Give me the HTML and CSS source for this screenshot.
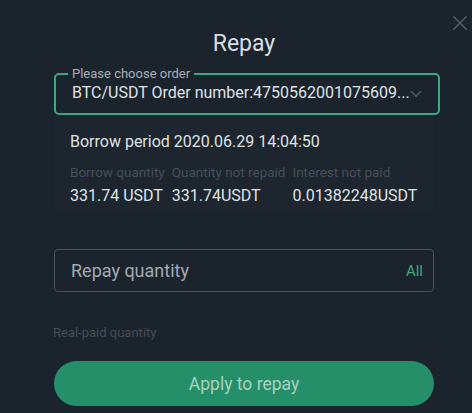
FILE: index.html
```html
<!DOCTYPE html>
<html lang="en">
<head>
    <meta charset="UTF-8">
    <meta name="viewport" content="width=device-width, initial-scale=1.0">
    <title>Repay</title>
    <link rel="stylesheet" href="styles.css">
</head>
<body>
    <div class="dialog">
        <button class="close" aria-label="Close">
            <svg width="16" height="16" viewBox="0 0 16 16"><path d="M1.5 1.5 L14.5 14.5 M14.5 1.5 L1.5 14.5" stroke="#59626c" stroke-width="1.4" fill="none"/></svg>
        </button>

        <h1>Repay</h1>

        <fieldset class="order-select">
            <legend>Please choose order</legend>
            <div class="select-row">
                <span class="select-value">BTC/USDT Order number:4750562001075609...</span>
                <svg class="chevron" width="12" height="8" viewBox="0 0 12 8"><path d="M1 1 L6 6.5 L11 1" stroke="#535d67" stroke-width="1.3" fill="none"/></svg>
            </div>
        </fieldset>

        <div class="order-info">
            <div class="period">Borrow period 2020.06.29 14:04:50</div>
            <div class="info-grid">
                <span class="info-label">Borrow quantity</span>
                <span class="info-label">Quantity not repaid</span>
                <span class="info-label">Interest not paid</span>
                <span class="info-value">331.74 USDT</span>
                <span class="info-value">331.74USDT</span>
                <span class="info-value">0.01382248USDT</span>
            </div>
        </div>

        <div class="quantity-input">
            <input type="text" placeholder="Repay quantity">
            <span class="all">All</span>
        </div>

        <div class="real-paid">Real-paid quantity</div>

        <button class="apply-button">Apply to repay</button>
    </div>
</body>
</html>
```

FILE: styles.css
```css
body {
    margin: 0;
    background-color: #1b232c;
    font-family: Roboto, "Liberation Sans", sans-serif;
    color: #dde2e7;
}
.dialog {
    width: 380px;
    margin-left: 54px;
    padding-top: 30px;
}
.close {
    position: absolute;
    top: 15px;
    left: 452px;
    padding: 0;
    background: none;
    border: none;
    cursor: pointer;
}
h1 {
    margin: 0 0 9px;
    text-align: center;
    font-size: 23px;
    line-height: 27px;
    font-weight: 400;
    color: #d9dee3;
}
.order-select {
    margin: 0;
    padding: 0 14px 10px 12px;
    border: 2px solid #3aa981;
    border-radius: 5px;
}
.order-select legend {
    padding: 0 4px;
    font-size: 13px;
    line-height: 15px;
    color: #a9b0b7;
}
.select-row {
    display: flex;
    align-items: center;
    justify-content: space-between;
    padding: 2px 2px 0 4px;
}
.select-value {
    font-size: 16px;
    line-height: 20px;
    color: #dfe3e8;
    white-space: nowrap;
}
.chevron {
    margin-top: 1px;
}
.order-info {
    padding: 17px 16px 5px;
    background-color: #1d252e;
}
.period {
    font-size: 16px;
    line-height: 20px;
    color: #dfe3e8;
}
.info-grid {
    display: grid;
    grid-template-columns: auto auto auto;
    justify-content: start;
    column-gap: 7px;
    row-gap: 6px;
    margin-top: 12px;
}
.info-label {
    font-size: 13.5px;
    line-height: 16px;
    color: #46505a;
}
.info-value {
    font-size: 16px;
    line-height: 20px;
    color: #dfe3e8;
}
.quantity-input {
    display: flex;
    align-items: center;
    height: 41px;
    margin-top: 38px;
    padding: 0 10px 0 16px;
    border: 1.5px solid #48525c;
    border-radius: 4px;
}
.quantity-input input {
    flex: 1;
    padding: 0;
    background: none;
    border: none;
    outline: none;
    font-family: inherit;
    font-size: 18px;
    color: #dfe3e8;
}
.quantity-input input::placeholder {
    color: #a2aab2;
}
.all {
    font-size: 15px;
    color: #3aa97f;
}
.real-paid {
    margin-top: 33px;
    margin-left: -1px;
    font-size: 13px;
    line-height: 16px;
    color: #444e58;
}
.apply-button {
    display: block;
    width: 100%;
    height: 45px;
    margin-top: 20px;
    background-color: #258f69;
    border: none;
    border-radius: 23px;
    font-family: inherit;
    font-size: 17.5px;
    color: #a9d2c0;
    cursor: pointer;
}
```
